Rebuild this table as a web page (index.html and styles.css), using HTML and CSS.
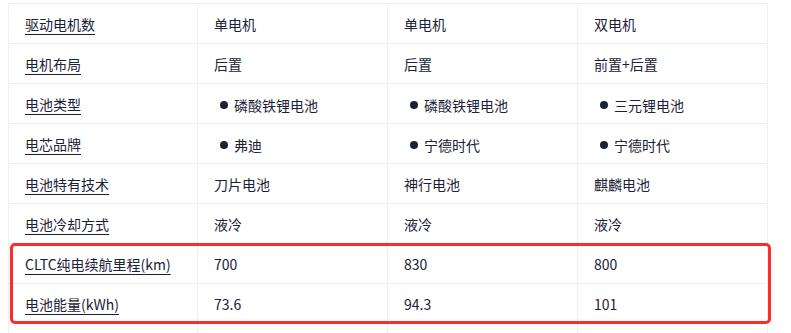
FILE: index.html
```html
<!DOCTYPE html>
<html lang="zh">
<head>
<meta charset="utf-8">
<link rel="stylesheet" href="styles.css">
</head>
<body>
<div class="wrap">
  <table class="spec">
    <tbody>
      <tr><td class="label"><span>驱动电机数</span></td><td>单电机</td><td>单电机</td><td>双电机</td></tr>
      <tr><td class="label"><span>电机布局</span></td><td>后置</td><td>后置</td><td>前置+后置</td></tr>
      <tr><td class="label"><span>电池类型</span></td><td><span class="dot">磷酸铁锂电池</span></td><td><span class="dot">磷酸铁锂电池</span></td><td><span class="dot">三元锂电池</span></td></tr>
      <tr><td class="label"><span>电芯品牌</span></td><td><span class="dot">弗迪</span></td><td><span class="dot">宁德时代</span></td><td><span class="dot">宁德时代</span></td></tr>
      <tr><td class="label"><span>电池特有技术</span></td><td>刀片电池</td><td>神行电池</td><td>麒麟电池</td></tr>
      <tr><td class="label"><span>电池冷却方式</span></td><td>液冷</td><td>液冷</td><td>液冷</td></tr>
      <tr><td class="label"><span>CLTC纯电续航里程(km)</span></td><td>700</td><td>830</td><td>800</td></tr>
      <tr><td class="label"><span>电池能量(kWh)</span></td><td>73.6</td><td>94.3</td><td>101</td></tr>
      <tr class="tail"><td></td><td></td><td></td><td></td></tr>
    </tbody>
  </table>
  <div class="highlight"></div>
</div>
</body>
</html>
```

FILE: styles.css
```css
html, body {
  margin: 0;
  padding: 0;
  background: #ffffff;
}
body {
  width: 791px;
  height: 333px;
  overflow: hidden;
  font-family: "Noto Sans CJK SC", "Noto Sans", sans-serif;
  font-size: 14px;
  color: #1b2236;
}
.wrap {
  position: relative;
  height: 330px;
  overflow: hidden;
  padding: 3px 0 0 8px;
}
.spec {
  border-collapse: collapse;
  table-layout: fixed;
  width: 759px;
}
.spec td {
  border: 1px solid #eef0f4;
  height: 40px;
  padding: 0 0 0 16px;
  box-sizing: border-box;
  line-height: 20px;
  vertical-align: middle;
  white-space: nowrap;
}
.spec td:nth-child(1) { width: 189px; }
.spec td:nth-child(2) { width: 190px; }
.spec td:nth-child(3) { width: 190px; }
.spec td:nth-child(4) { width: 190px; }
.spec .tail td {
  height: 10px;
  border-bottom: none;
}
.spec td.label span {
  text-decoration: underline;
  text-decoration-thickness: 1px;
  text-underline-offset: 4px;
}
.dot {
  display: inline-flex;
  align-items: center;
  margin-left: 6px;
}
.dot::before {
  content: "";
  width: 8px;
  height: 8px;
  border-radius: 50%;
  background: #1b2236;
  margin-right: 6px;
}
.highlight {
  position: absolute;
  left: 10px;
  top: 243px;
  width: 761px;
  height: 81px;
  box-sizing: border-box;
  border: 3px solid #ff2a2a;
  border-radius: 5px;
}
```
